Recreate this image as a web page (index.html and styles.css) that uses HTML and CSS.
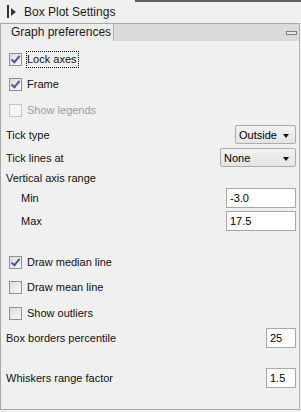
FILE: index.html
```html
<!DOCTYPE html>
<html lang="en">
<head>
  <meta charset="UTF-8">
  <meta name="viewport" content="width=device-width, initial-scale=1.0">
  <title>Box Plot Settings</title>
  <link rel="stylesheet" href="styles.css">
</head>
<body>
  <!-- Title bar -->
  <div class="title-bar">
    <span class="grip"></span>
    <span class="arrow"></span>
    <span class="title">Box Plot Settings</span>
    <span class="title-line"></span>
  </div>

  <div class="panel">
    <!-- Tab strip -->
    <div class="tab-strip">
      <div class="tab">Graph preferences</div>
      <div class="tab-fill">
        <span class="minimize"></span>
      </div>
    </div>

    <div class="content">
      <label class="check-row row-first">
        <span class="checkbox checked"></span>
        <span class="check-label focused">Lock axes</span>
      </label>
      <label class="check-row">
        <span class="checkbox checked"></span>
        <span class="check-label">Frame</span>
      </label>
      <label class="check-row row-tall disabled">
        <span class="checkbox"></span>
        <span class="check-label">Show legends</span>
      </label>

      <div class="field-row row-tick">
        <span class="field-label">Tick type</span>
        <div class="select select-type">Outside<span class="caret"></span></div>
      </div>
      <div class="field-row row-lines">
        <span class="field-label">Tick lines at</span>
        <div class="select select-lines">None<span class="caret"></span></div>
      </div>

      <div class="section-label">Vertical axis range</div>
      <div class="field-row row-min">
        <span class="field-label indent">Min</span>
        <div class="input input-wide">-3.0</div>
      </div>
      <div class="field-row row-max">
        <span class="field-label indent">Max</span>
        <div class="input input-wide">17.5</div>
      </div>

      <label class="check-row row-median">
        <span class="checkbox checked"></span>
        <span class="check-label">Draw median line</span>
      </label>
      <label class="check-row">
        <span class="checkbox"></span>
        <span class="check-label">Draw mean line</span>
      </label>
      <label class="check-row row-tall">
        <span class="checkbox"></span>
        <span class="check-label">Show outliers</span>
      </label>

      <div class="field-row row-borders">
        <span class="field-label">Box borders percentile</span>
        <div class="input input-small">25</div>
      </div>
      <div class="field-row row-whiskers">
        <span class="field-label">Whiskers range factor</span>
        <div class="input input-small">1.5</div>
      </div>
    </div>
  </div>
</body>
</html>
```

FILE: styles.css
```css
/* General Styling */
body {
  font-family: "Liberation Sans", Arial, sans-serif;
  font-size: 11px;
  color: #111;
  margin: 0;
  padding: 0;
  width: 301px;
  height: 412px;
  background-color: #f0f0f0;
  overflow: hidden;
}

/* Title Bar */
.title-bar {
  display: flex;
  align-items: center;
  height: 23px;
}

.grip {
  width: 2px;
  height: 13px;
  margin-left: 7px;
  background: #333;
}

.arrow {
  width: 0;
  height: 0;
  margin-left: 2px;
  border-top: 4px solid transparent;
  border-bottom: 4px solid transparent;
  border-left: 5px solid #333;
}

.title {
  margin-left: 8px;
  font-size: 12px;
  color: #1a1a1a;
}

.title-line {
  flex: 1;
  align-self: stretch;
  margin-left: 20px;
  border-top: 2px solid #606060;
}

/* Panel */
.panel {
  height: 387px;
  border: 1px solid #a8a8a8;
  border-right-color: #b4b4b4;
  margin-right: 1px;
  box-sizing: border-box;
}

.tab-strip {
  display: flex;
  height: 17px;
  background: #dadada;
}

.tab {
  width: 113px;
  padding-left: 10px;
  box-sizing: border-box;
  line-height: 16px;
  font-size: 12px;
  color: #1a1a1a;
  background: #ececec;
  border-right: 1px solid #b0b0b0;
}

.tab-fill {
  flex: 1;
  display: flex;
  justify-content: flex-end;
  align-items: center;
  padding-right: 2px;
}

.minimize {
  width: 9px;
  height: 2px;
  border: 1px solid #808080;
  background: #e8e8e8;
}

/* Content */
.content {
  display: flex;
  flex-direction: column;
  padding: 5px 3px 0 4px;
}

.check-row {
  display: flex;
  align-items: center;
  height: 25px;
  padding-left: 4px;
}

.row-first,
.row-tall {
  height: 26px;
}

.checkbox {
  position: relative;
  width: 11px;
  height: 11px;
  border: 1px solid #8e8f8f;
  background: linear-gradient(135deg, #dcdcdc, #f8f8f8);
}

.checkbox.checked::after {
  content: "";
  position: absolute;
  left: 3px;
  top: 0;
  width: 3px;
  height: 7px;
  border-right: 2px solid #4a5a9e;
  border-bottom: 2px solid #4a5a9e;
  transform: rotate(40deg);
}

.check-label {
  margin-left: 4px;
  padding: 1px 1px 2px 0;
  border: 1px solid transparent;
}

.check-label.focused {
  border: 1px dotted #000;
}

.disabled .checkbox {
  border-color: #c6c6c6;
  background: #f4f4f4;
}

.disabled .check-label {
  color: #9c9c9c;
}

/* Field rows */
.field-row {
  display: flex;
  align-items: center;
  justify-content: space-between;
}

.field-label {
  padding-left: 1px;
}

.field-label.indent {
  padding-left: 16px;
}

.row-tick {
  height: 21px;
  margin-top: 1px;
}

.row-lines {
  height: 21px;
  margin-top: 2px;
}

.section-label {
  height: 20px;
  line-height: 20px;
  padding-left: 1px;
}

.row-max {
  margin-top: 3px;
}

.row-median {
  margin-top: 19px;
}

.row-borders {
  margin-top: 2px;
}

.row-whiskers {
  margin-top: 20px;
}

.select {
  position: relative;
  height: 19px;
  line-height: 18px;
  padding-left: 3px;
  box-sizing: border-box;
  border: 1px solid #acacac;
  border-radius: 2px;
  background: linear-gradient(#f2f2f2, #e4e4e4);
  color: #000;
}

.select-type {
  width: 61px;
}

.select-lines {
  width: 76px;
}

.caret {
  position: absolute;
  right: 6px;
  top: 8px;
  width: 0;
  height: 0;
  border-left: 3px solid transparent;
  border-right: 3px solid transparent;
  border-top: 4px solid #111;
}

.input {
  height: 20px;
  line-height: 18px;
  padding-left: 3px;
  box-sizing: border-box;
  border: 1px solid #a8a8a8;
  background: #fff;
  color: #000;
}

.input-wide {
  width: 70px;
}

.input-small {
  width: 30px;
}
```
